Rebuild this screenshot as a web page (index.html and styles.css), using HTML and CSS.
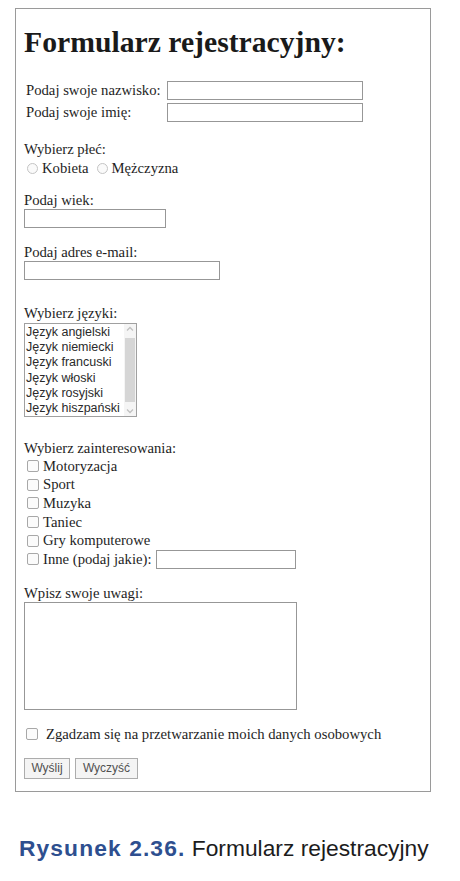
FILE: index.html
```html
<!DOCTYPE html>
<html>
<head>
  <meta charset="utf-8">
  <link rel="stylesheet" href="styles.css">
</head>
<body>
  <div class="frame">
    <h1>Formularz rejestracyjny:</h1>

    <div class="name-table">
      <label class="cell-label">Podaj swoje nazwisko:</label>
      <input type="text" class="field field-name">
      <label class="cell-label">Podaj swoje imię:</label>
      <input type="text" class="field field-name">
    </div>

    <div class="group group-gender">
      <div class="label">Wybierz płeć:</div>
      <div class="radio-row">
        <label class="choice"><input type="radio" name="plec" class="radio">Kobieta</label>
        <label class="choice"><input type="radio" name="plec" class="radio">Mężczyzna</label>
      </div>
    </div>

    <div class="group group-age">
      <div class="label">Podaj wiek:</div>
      <input type="text" class="field field-age">
    </div>

    <div class="group group-email">
      <div class="label">Podaj adres e-mail:</div>
      <input type="text" class="field field-email">
    </div>

    <div class="group group-langs">
      <div class="label">Wybierz języki:</div>
      <div class="listbox">
        <ul class="options">
          <li>Język angielski</li>
          <li>Język niemiecki</li>
          <li>Język francuski</li>
          <li>Język włoski</li>
          <li>Język rosyjski</li>
          <li>Język hiszpański</li>
        </ul>
        <div class="scrollbar">
          <svg class="arrow" width="12" height="10" viewBox="0 0 12 10"><path d="M3 6.5 L6 3.5 L9 6.5" fill="none" stroke="#c0c0c0" stroke-width="1.3"/></svg>
          <div class="thumb"></div>
          <svg class="arrow" width="12" height="10" viewBox="0 0 12 10"><path d="M3 3.5 L6 6.5 L9 3.5" fill="none" stroke="#c0c0c0" stroke-width="1.3"/></svg>
        </div>
      </div>
    </div>

    <div class="group group-interests">
      <div class="label">Wybierz zainteresowania:</div>
      <label class="check-row"><input type="checkbox" class="box">Motoryzacja</label>
      <label class="check-row"><input type="checkbox" class="box">Sport</label>
      <label class="check-row"><input type="checkbox" class="box">Muzyka</label>
      <label class="check-row"><input type="checkbox" class="box">Taniec</label>
      <label class="check-row"><input type="checkbox" class="box">Gry komputerowe</label>
      <label class="check-row"><input type="checkbox" class="box">Inne (podaj jakie):<input type="text" class="field field-other"></label>
    </div>

    <div class="group group-notes">
      <div class="label">Wpisz swoje uwagi:</div>
      <textarea class="notes"></textarea>
    </div>

    <label class="consent"><input type="checkbox" class="box box-consent">Zgadzam się na przetwarzanie moich danych osobowych</label>

    <div class="buttons">
      <button class="btn btn-send">Wyślij</button>
      <button class="btn btn-clear">Wyczyść</button>
    </div>
  </div>

  <p class="caption"><span class="caption-num">Rysunek 2.36.</span> Formularz rejestracyjny</p>
</body>
</html>
```

FILE: styles.css
```css
body {
  margin: 0;
  background: #ffffff;
  font-family: "Liberation Serif", "Times New Roman", serif;
  font-size: 14.7px;
  color: #1e1e1e;
}

/* Ramka formularza */
.frame {
  width: 416px;
  height: 784px;
  margin: 8px 0 0 15px;
  padding: 0 8px;
  border: 1px solid #9a9a9a;
  box-sizing: border-box;
}

h1 {
  margin: 16px 0 0 0;
  font-size: 29.7px;
  line-height: 34px;
  font-weight: bold;
  color: #1a1a1a;
}

.field {
  display: block;
  height: 19px;
  margin: 0;
  padding: 0;
  border: 1px solid #979797;
  background: #fff;
  box-sizing: border-box;
}

/* Nazwisko / imię */
.name-table {
  display: grid;
  grid-template-columns: 143px 196px;
  grid-auto-rows: 22px;
  align-items: center;
  margin-top: 20px;
}

.cell-label {
  padding-left: 2px;
  line-height: 18px;
}

.field-name {
  width: 196px;
}

.group {
  margin-top: 15px;
}

.label {
  line-height: 18px;
}

/* Płeć */
.group-gender {
  margin-top: 17px;
}

.radio-row {
  display: flex;
  line-height: 20px;
}

.choice {
  display: flex;
  align-items: center;
  margin-right: 5px;
}

.radio {
  appearance: none;
  width: 11px;
  height: 11px;
  margin: 0 4px 0 3px;
  border: 1px solid #c4c4c4;
  border-radius: 50%;
  background: #fafafa;
}

.group-age {
  margin-top: 13px;
}

.field-age {
  width: 142px;
}

.field-email {
  width: 196px;
}

/* Lista języków */
.group-langs {
  margin-top: 24px;
}

.listbox {
  display: flex;
  width: 113px;
  height: 94px;
  margin-top: 1px;
  border: 1px solid #a0a0a0;
  box-sizing: border-box;
  background: #fff;
}

.options {
  flex: 1;
  margin: 0;
  padding: 1px 0 0 1px;
  list-style: none;
  font-family: "Liberation Sans", Arial, sans-serif;
  font-size: 12.5px;
  line-height: 15.2px;
  color: #2a2a2a;
  white-space: nowrap;
  overflow: hidden;
}

.scrollbar {
  display: flex;
  flex-direction: column;
  align-items: center;
  width: 12px;
  background: #f5f5f5;
}

.arrow {
  flex: none;
}

.thumb {
  flex: 1;
  width: 10px;
  margin: 4px 0 4px 0;
  background: #d6d6d6;
}

/* Zainteresowania */
.group-interests {
  margin-top: 22px;
}

.check-row {
  display: flex;
  align-items: center;
  height: 18.6px;
}

.box {
  appearance: none;
  width: 12px;
  height: 12px;
  margin: 0 4px 0 3px;
  border: 1px solid #a8a8a8;
  border-radius: 2px;
  background: #fbfbfb;
}

.field-other {
  width: 140px;
  margin-left: 5px;
}

/* Uwagi */
.group-notes {
  margin-top: 15px;
}

.notes {
  display: block;
  width: 273px;
  height: 108px;
  margin: 0;
  padding: 0;
  border: 1px solid #979797;
  box-sizing: border-box;
  resize: none;
}

.consent {
  display: flex;
  align-items: center;
  margin-top: 15px;
  line-height: 18px;
}

.box-consent {
  margin: 0 8px 0 2px;
}

.buttons {
  display: flex;
  gap: 5px;
  margin-top: 15px;
}

.btn {
  height: 21px;
  padding: 0 5px;
  border: 1px solid #acacac;
  border-radius: 0;
  background: #f4f4f4;
  font-family: "Liberation Sans", Arial, sans-serif;
  font-size: 12px;
  color: #505050;
}

.btn-send {
  width: 46px;
}

.btn-clear {
  width: 63px;
}

/* Podpis rysunku */
.caption {
  margin: 43px 0 0 19px;
  font-family: "Liberation Sans", Arial, sans-serif;
  font-size: 22.8px;
  line-height: 26px;
  color: #1c1c1c;
}

.caption-num {
  font-weight: bold;
  letter-spacing: 1.1px;
  color: #2e4f8f;
}
```
